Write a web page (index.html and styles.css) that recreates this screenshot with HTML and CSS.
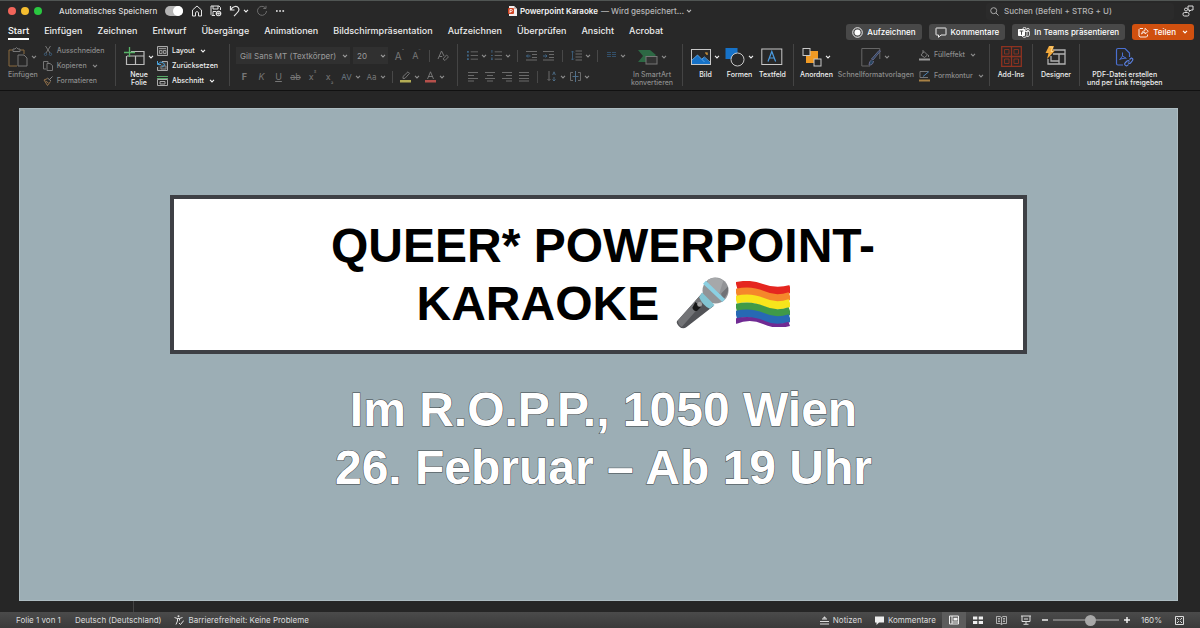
FILE: index.html
```html
<!DOCTYPE html>
<html lang="de">
<head>
<meta charset="utf-8">
<title>Powerpoint Karaoke</title>
<link rel="stylesheet" href="styles.css">
</head>
<body>
<svg class="defs" aria-hidden="true">
  <symbol id="chev" viewBox="0 0 6 4"><path d="M1 .8 3 2.9 5 .8" fill="none" stroke="currentColor" stroke-width="1.1"/></symbol>
  <symbol id="bullets" viewBox="0 0 12 12"><path d="M4 2h8M4 6h8M4 10h8" stroke="#6a6a6a"/><path d="M0 2h2M0 6h2M0 10h2" stroke="#3f6585" stroke-width="2"/></symbol>
  <symbol id="numbers" viewBox="0 0 12 12"><path d="M4 2h8M4 6h8M4 10h8" stroke="#6a6a6a"/><path d="M1 0v3M0 6h2M0 10h2M1 8v3" stroke="#3f6585"/></symbol>
</svg>

<header class="titlebar">
  <div class="tb-left">
    <span class="lights"><i class="red"></i><i class="yellow"></i><i class="green"></i></span>
    <label class="autosave" for="autosave">Automatisches Speichern</label>
    <input class="switch" type="checkbox" id="autosave" role="switch" checked>
    <button class="ib" aria-label="Start"><svg width="12" height="12" viewBox="0 0 12 12"><path d="M1.500 5 6 1l4.500 4v6h-3V7.500Q6 5.500 4.500 7.500V11h-3z" fill="none" stroke="#e4e4e4"/></svg></button>
    <button class="ib" aria-label="Sichern"><svg width="12" height="12" viewBox="0 0 12 12"><path d="M5 10.500H2L1 9.500V1h8l1.500 1.500V5M3 1v3h5V1M3 10V6.500h3" fill="none" stroke="#e4e4e4"/><circle cx="8.500" cy="8.500" r="2.800" fill="#e4e4e4"/><path d="M7 8q1.500-1.200 3 0M7 9.300q1.500 1 3 0" stroke="#282828" stroke-width=".7" fill="none"/></svg></button>
    <button class="ib undo" aria-label="Widerrufen"><svg width="12" height="12" viewBox="0 0 12 12"><path d="M1.500 1v4h4M1.700 4.700C4 1 8 .5 9.500 3S9 7 5 11" fill="none" stroke="#e4e4e4" stroke-width="1.200"/></svg><svg class="chev"><use href="#chev"/></svg></button>
    <button class="ib" aria-label="Wiederholen" disabled><svg width="12" height="12" viewBox="0 0 12 12"><path d="M9.500 3A4.500 4.500 0 1 0 10.500 6M10 .8V3.500H7.300" fill="none" stroke="#6c6c6c"/></svg></button>
    <button class="ib" aria-label="Mehr"><svg width="10" height="4"><path d="M1 2h1.700M4.200 2h1.700M7.400 2h1.700" stroke="#f0f0f0" stroke-width="1.700"/></svg></button>
  </div>
  <div class="doc"><svg width="9" height="10" viewBox="0 0 9 10"><path d="M1 0h5l3 3v7H1z" fill="#f3eeee"/><path d="M6 0v3h3" fill="#c9b9b5"/><rect y="2" width="6" height="6" rx="1" fill="#d04423"/><path d="M2 7V3.500h1.300a1 1 0 0 1 0 2H2" fill="none" stroke="#fff" stroke-width=".8"/></svg><b>Powerpoint Karaoke</b><span>— Wird gespeichert…</span><svg class="chev"><use href="#chev"/></svg></div>
  <div class="tb-right">
    <label class="search"><svg width="9" height="9" viewBox="0 0 9 9"><circle cx="3.700" cy="3.700" r="3" fill="none" stroke="#aaa"/><path d="M6 6l2.500 2.500" stroke="#aaa"/></svg><input type="text" aria-label="Suchen" placeholder="Suchen (Befehl + STRG + U)"></label>
    <button class="ib" aria-label="Zusammenarbeit"><svg width="12" height="12" viewBox="0 0 12 12"><path d="M6 1h5v4H9L7.500 6.500V5H6z" fill="none" stroke="#ddd"/><circle cx="4" cy="4.500" r="1.500" fill="#282828" stroke="#ddd"/><rect x="1" y="7.500" width="6" height="3.500" rx="1.500" fill="none" stroke="#ddd"/></svg></button>
  </div>
</header>

<div class="tabbar">
  <nav class="tabs">
    <a href="#" class="active">Start</a><a href="#">Einfügen</a><a href="#">Zeichnen</a><a href="#">Entwurf</a><a href="#">Übergänge</a><a href="#">Animationen</a><a href="#">Bildschirmpräsentation</a><a href="#">Aufzeichnen</a><a href="#">Überprüfen</a><a href="#">Ansicht</a><a href="#">Acrobat</a>
  </nav>
  <div class="actions">
    <button class="pill"><svg width="11" height="11" viewBox="0 0 11 11"><circle cx="5.500" cy="5.500" r="4.800" fill="none" stroke="#fff" stroke-width=".9"/><circle cx="5.500" cy="5.500" r="3" fill="#fff"/></svg>Aufzeichnen</button>
    <button class="pill"><svg width="12" height="11" viewBox="0 0 12 11"><path d="M1.500 1h9q.5 0 .5.500v6q0 .5-.5.500H6L3.500 10.300V8h-2Q1 8 1 7.500v-6Q1 1 1.500 1z" fill="none" stroke="#fff" stroke-width=".9"/></svg>Kommentare</button>
    <button class="pill"><svg width="12" height="11" viewBox="0 0 12 11"><circle cx="6.500" cy="2" r="1.600" fill="none" stroke="#fff" stroke-width=".8"/><circle cx="10" cy="2.500" r="1.200" fill="none" stroke="#fff" stroke-width=".8"/><path d="M8 4.500h3.500V8q-.5 2-2.500 1.500M4 9q1 1.700 3 1.300T9 8V4.500H7" fill="none" stroke="#fff" stroke-width=".8"/><rect y="2" width="7" height="7" rx=".8" fill="#fff"/><path d="M1.700 4h3.600M3.500 4v3.800" stroke="#484848"/></svg>In Teams präsentieren</button>
    <button class="pill share"><svg width="11" height="11" viewBox="0 0 11 11"><path d="M5 1.500H2L1 2.500v6.500l1 1h6.500l1-1V7.500" fill="none" stroke="#fff" stroke-width=".9"/><path d="M3.500 7Q4 3.700 7 3.500V1.300L10.300 4.300 7 7V5.200Q5 5.200 3.500 7z" fill="none" stroke="#fff" stroke-width=".8"/></svg>Teilen<svg class="chev"><use href="#chev"/></svg></button>
  </div>
</div>

<section class="ribbon" aria-label="Start">
  <div class="group g1">
    <button class="big off"><span class="pic"><svg width="20" height="20" viewBox="0 0 20 20"><path d="M9 19H1V3h4M12 3h4v4" fill="none" stroke="#8a6a3e"/><path d="M5 4.500V2h2q1.500-3 3 0h2v2.500z" fill="none" stroke="#777"/><path d="M10 8h6l3 3v8h-9z" fill="#282828" stroke="#777"/></svg><svg class="chev"><use href="#chev"/></svg></span><span>Einfügen</span></button>
    <div class="rows off">
      <button><svg width="10" height="10" viewBox="0 0 10 10"><path d="M2.500 0 7 7M7.500 0 3 7" stroke="#777"/><circle cx="2.500" cy="8.300" r="1.200" fill="none" stroke="#3f6585" stroke-width=".8"/><circle cx="7.500" cy="8.300" r="1.200" fill="none" stroke="#3f6585" stroke-width=".8"/></svg>Ausschneiden</button>
      <button><svg width="10" height="10" viewBox="0 0 10 10"><path d="M3 8H.5V.5H5V2M4 2.500h3l2.500 2V9.500H4z" fill="none" stroke="#777"/></svg>Kopieren<svg class="chev"><use href="#chev"/></svg></button>
      <button><svg width="10" height="10" viewBox="0 0 10 10"><path d="M9.500.5 6.500 3.500M4.500 2l3.500 3" stroke="#888"/><path d="M4.500 2.500 1 4l3.500 5.500L7.500 5.500M2.500 5l3 2" fill="none" stroke="#94724a"/></svg>Formatieren</button>
    </div>
  </div>

  <div class="group g2">
    <button class="big"><span class="pic"><svg width="21" height="20" viewBox="0 0 21 20"><path d="M7 4.500h13v13H2.500V9M3 9h17M11.500 9v8" fill="none" stroke="#bbb" stroke-width="1.200"/><path d="M5.500 0v10M0 5.500h11" stroke="#58b368" stroke-width="1.300"/></svg><svg class="chev"><use href="#chev"/></svg></span><span>Neue<br>Folie</span></button>
    <div class="rows">
      <button><svg width="11" height="10" viewBox="0 0 11 10"><path d="M.5.5h10v9H.5z" fill="#3b3b3b" stroke="#aaa"/><path d="M2 2.500h7M2.500 4.500h2.500v3H2.500zM6.500 4.500h2.500v3H6.500z" fill="none" stroke="#aaa" stroke-width=".8"/></svg>Layout<svg class="chev"><use href="#chev"/></svg></button>
      <button><svg width="11" height="10" viewBox="0 0 11 10"><path d="M5 .5h5.500v9h-10V6" fill="#3b3b3b" stroke="#aaa"/><path d="M4 5h5v3H4z" fill="none" stroke="#888"/><path d="M.5 0v3.500H4M.8 3Q4-.5 6.500 2T5 6" fill="none" stroke="#4ba3dc"/></svg>Zurücksetzen</button>
      <button><svg width="11" height="10" viewBox="0 0 11 10"><path d="M0 .5h11M0 2.500h11" stroke="#58a868"/><path d="M.5 3.500h10v6H.5zM3 5.500h5v2.500H3z" fill="none" stroke="#aaa"/></svg>Abschnitt<svg class="chev"><use href="#chev"/></svg></button>
    </div>
  </div>

  <div class="group g3 off">
    <div class="line">
      <span class="combo font"><select aria-label="Schriftart"><option>Gill Sans MT (Textkörper)</option></select><svg class="chev"><use href="#chev"/></svg></span>
      <span class="combo size"><select aria-label="Schriftgrad"><option>20</option></select><svg class="chev"><use href="#chev"/></svg></span>
      <button class="c lg" aria-label="Größer">A<sup>ˆ</sup></button><button class="c" aria-label="Kleiner">A<sup>ˇ</sup></button><i class="sep"></i>
      <button class="c" aria-label="Formatierung löschen"><svg width="12" height="12" viewBox="0 0 12 12"><path d="M1 9 4.500 1 7 6M2.200 6.500h3" fill="none" stroke="#777"/><path d="M6 9 9.500 5l2 1.800L8 10.500z" fill="none" stroke="#777" stroke-width=".9"/></svg></button>
    </div>
    <div class="line">
      <button class="c"><b>F</b></button><button class="c"><em>K</em></button><button class="c"><u>U</u></button><button class="c"><s>ab</s></button><button class="c">x<sup>²</sup></button><button class="c">x<sub>₂</sub></button><button class="c av">AV</button><svg class="chev"><use href="#chev"/></svg><button class="c aa">Aa</button><svg class="chev"><use href="#chev"/></svg><i class="sep"></i>
      <button class="c" aria-label="Texthervorhebung"><svg width="11" height="12" viewBox="0 0 11 12"><path d="M3 7.500V5.500L8 .8l1.500 1.500-4.500 5z" fill="none" stroke="#888" stroke-width=".8"/><rect y="9" width="11" height="2.500" fill="#b4ad55"/></svg></button><svg class="chev"><use href="#chev"/></svg>
      <button class="c" aria-label="Schriftfarbe"><svg width="11" height="12" viewBox="0 0 11 12"><path d="M2.500 8 5.500.8 8.500 8M3.500 5.500h4" fill="none" stroke="#888" stroke-width=".8"/><rect y="9" width="11" height="2.500" fill="#b5504b"/></svg></button><svg class="chev"><use href="#chev"/></svg>
    </div>
  </div>

  <div class="group g4 off">
    <div class="paras">
      <div class="line">
        <button class="c" aria-label="Aufzählung"><svg width="11" height="11"><use href="#bullets"/></svg></button><svg class="chev"><use href="#chev"/></svg>
        <button class="c" aria-label="Nummerierung"><svg width="11" height="11"><use href="#numbers"/></svg></button><svg class="chev"><use href="#chev"/></svg><i class="sep"></i>
        <button class="c" aria-label="Einzug verkleinern"><svg width="11" height="11" viewBox="0 0 11 11"><path d="M0 1.500h11M6 4.500h5M6 7.500h5M0 10h11" stroke="#6a6a6a"/><path d="M4.500 6H.5M2 4.500.5 6 2 7.500" fill="none" stroke="#3f6585"/></svg></button>
        <button class="c" aria-label="Einzug vergrößern"><svg width="11" height="11" viewBox="0 0 11 11"><path d="M0 1.500h11M6 4.500h5M6 7.500h5M0 10h11" stroke="#6a6a6a"/><path d="M0 6h4M2.500 4.500 4 6 2.500 7.500" fill="none" stroke="#3f6585"/></svg></button><i class="sep"></i>
        <button class="c" aria-label="Zeilenabstand"><svg width="11" height="11" viewBox="0 0 11 11"><path d="M4.500 1h6.500M4.500 4h6.500M4.500 7h6.500M4.500 10h6.500" stroke="#6a6a6a"/><path d="M1.500 1v9M0 2.500 1.500 1 3 2.500M0 8.500 1.500 10 3 8.500" fill="none" stroke="#3f6585" stroke-width=".8"/></svg></button><svg class="chev"><use href="#chev"/></svg><i class="sep"></i>
        <button class="c" aria-label="Spalten"><svg width="9" height="7" viewBox="0 0 9 7"><path d="M0 .5h4M5 .5h4M0 2.500h4M5 2.500h4M0 4.500h4M5 4.500h4" stroke="#33506a"/></svg></button><svg class="chev"><use href="#chev"/></svg>
      </div>
      <div class="line">
        <button class="c" aria-label="Linksbündig"><svg width="10" height="11"><path d="M0 1.500h10M0 4.500h6M0 7.500h10M0 10h6" stroke="#6a6a6a"/></svg></button><button class="c" aria-label="Zentriert"><svg width="10" height="11"><path d="M0 1.500h10M2 4.500h6M0 7.500h10M2 10h6" stroke="#6a6a6a"/></svg></button><button class="c" aria-label="Rechtsbündig"><svg width="10" height="11"><path d="M0 1.500h10M4 4.500h6M0 7.500h10M4 10h6" stroke="#6a6a6a"/></svg></button><button class="c" aria-label="Blocksatz"><svg width="10" height="11"><path d="M0 1.500h10M0 4.500h10M0 7.500h10M0 10h10" stroke="#6a6a6a"/></svg></button><i class="sep"></i>
        <button class="c" aria-label="Textrichtung"><svg width="10" height="11" viewBox="0 0 10 11"><path d="M2 0v9.500M.5 8 2 9.500 3.500 8" fill="none" stroke="#6a6a6a"/><path d="M7 10V6M5.500 8.500 7 10l1.500-1.500M5.700 4 7 .8 8.300 4" fill="none" stroke="#4f6f8a" stroke-width=".9"/></svg></button><svg class="chev"><use href="#chev"/></svg>
        <button class="c" aria-label="Text ausrichten"><svg width="11" height="11" viewBox="0 0 11 11"><path d="M3 1.500H.5v8H3M8 1.500h2.500v8H8" fill="none" stroke="#6a6a6a"/><path d="M5.500 0v11M2.500 5.500h6" stroke="#4f6f8a"/></svg></button><svg class="chev"><use href="#chev"/></svg>
      </div>
    </div>
    <button class="big off"><span class="pic"><svg width="21" height="20" viewBox="0 0 21 20"><path d="M1 3h12l6 5-2 2H9v5H1l5-6z" fill="#2d6844"/><rect x="9" y="9.500" width="11" height="7.500" fill="#333" stroke="#777"/></svg><svg class="chev"><use href="#chev"/></svg></span><span>In SmartArt<br>konvertieren</span></button>
  </div>

  <div class="group g5">
    <button class="big"><span class="pic"><svg width="20" height="20" viewBox="0 0 20 20"><rect x=".5" y="2.500" width="19" height="15" fill="#282828" stroke="#c8c8c8"/><path d="M1 16v-3l5.500-5 4 4 2.500-2 6 5.500V17H1z" fill="#1672c8"/><path d="M1 13l5.500-5 7 7M11 12l2.500-2 5.500 5" fill="none" stroke="#69b0ee" stroke-width=".8"/><path d="M14 6h2v2" stroke="#e8a33b" fill="none" stroke-width="1.200"/></svg><svg class="chev"><use href="#chev"/></svg></span><span>Bild</span></button>
    <button class="big"><span class="pic"><svg width="20" height="20" viewBox="0 0 20 20"><rect x=".5" y="1" width="12" height="11" fill="#1672c8"/><circle cx="12.500" cy="12.500" r="6.500" fill="#282828" stroke="#c8c8c8"/></svg><svg class="chev"><use href="#chev"/></svg></span><span>Formen</span></button>
    <button class="big"><span class="pic"><svg width="22" height="20" viewBox="0 0 22 20"><rect x=".8" y="2" width="20" height="15.500" fill="none" stroke="#c8c8c8"/><path d="M7 14.500 10.800 4.500l3.800 10M8.200 11h5.200" fill="none" stroke="#4a9be0" stroke-width="1.200"/></svg></span><span>Textfeld</span></button>
  </div>

  <div class="group g6">
    <button class="big"><span class="pic"><svg width="20" height="20" viewBox="0 0 20 20"><path d="M4 4h12v12H4z" fill="#f09a24"/><rect x="1" y="1.500" width="7" height="7" fill="#282828" stroke="#c8c8c8"/><rect x="12" y="12" width="7" height="7" fill="#282828" stroke="#c8c8c8"/></svg><svg class="chev"><use href="#chev"/></svg></span><span>Anordnen</span></button>
    <button class="big off styles"><span class="pic"><svg width="20" height="20" viewBox="0 0 20 20"><path d="M9 19H.8V1.500h18V12" fill="none" stroke="#666"/><path d="M19.500 4 12 13l-1.500-1L18 3.500zM10.500 13Q8 14 8 18q4 .5 4.500-4" fill="#29475f" stroke="#668"/></svg><svg class="chev"><use href="#chev"/></svg></span><span>Schnellformatvorlagen</span></button>
    <div class="rows fx off">
      <button><svg width="11" height="11" viewBox="0 0 11 11"><path d="M2 5 5 1.500 8.500 5 5.500 7.500zM4 0v3M9.500 5v2" fill="none" stroke="#888" stroke-width=".9"/><rect y="8.500" width="11" height="2" fill="#999"/></svg>Fülleffekt<svg class="chev"><use href="#chev"/></svg></button>
      <button><svg width="11" height="11" viewBox="0 0 11 11"><path d="M9 .5H1v6h8" fill="none" stroke="#777"/><path d="M4 5.500 10 .5" stroke="#4b83b5"/><rect y="8.500" width="11" height="2" fill="#a88145"/></svg>Formkontur<svg class="chev"><use href="#chev"/></svg></button>
    </div>
  </div>

  <div class="group g7"><button class="big"><span class="pic"><svg width="21" height="21" viewBox="0 0 21 21"><path d="M.7.7h19.600v19.600H.7zM10.500 1v19M1 10.500h19" fill="none" stroke="#8f3220" stroke-width="1.300"/><path d="M3.500 3.500H8V8H3.500zM13 3.500h4.500V8H13zM3.500 13H8v4.500H3.500zM13 13h4.500v4.500H13z" fill="none" stroke="#8f3220" stroke-width=".9"/></svg></span><span>Add-Ins</span></button></div>
  <div class="group g8"><button class="big"><span class="pic"><svg width="21" height="21" viewBox="0 0 21 21"><path d="M8 4h12v14H3v-5M8 8h12M14 8v10M6 10v5h8" fill="none" stroke="#b0b0b0" stroke-width="1.300"/><path d="M4 0h5L7.500 4.500H10L2 13l1.500-6H.5z" fill="#f2a83a"/><path d="M4.500 1h3L6 5.500h2" fill="none" stroke="#ffdf9c" stroke-width=".8"/></svg></span><span>Designer</span></button></div>
  <div class="group g9"><button class="big"><span class="pic"><svg width="19" height="20" viewBox="0 0 19 20"><path d="M8 18H3Q1.500 18 1.500 16.500V3Q1.500 1.500 3 1.500h7L14.500 6v4" fill="none" stroke="#4a6fd0" stroke-width="1.200"/><path d="M7.500 5.500v3.500L4.500 13M7.500 9l4 2.500M5 12l6-1" fill="none" stroke="#4a6fd0"/><path d="M10 16l2-2q1.500-.8 2.500.5M13 15.500q1 1.500 2.500.5l2-2.500q1-2-1-2.500l-2 1.500M13.500 17.500q-2 2.500-3.500.5-.8-1 0-2" fill="none" stroke="#5a80e0" stroke-width="1.200"/></svg></span><span>PDF-Datei erstellen<br>und per Link freigeben</span></button></div>
</section>

<main class="workspace">
  <article class="slide">
    <h1>QUEER* POWERPOINT-<br>KARAOKE <svg class="mic" viewBox="0 0 54 56" role="img" aria-label="Mikrofon"><path d="M26 18 38 31 10 53Q6 56 2 52T1 46z" fill="#525357"/><path d="M26 18l5 5L5 53Q1 51 1 46z" fill="#737477"/><path d="M19 27l6 5-4 4q-4 1-5-3z" fill="#161616"/><circle cx="23.500" cy="29.500" r="2.500" fill="#a0a0a0"/><circle cx="40" cy="15" r="13.500" fill="#929497"/><path d="M32 4Q40-1 48 5l-4 13-12-9z" fill="#a6a8aa"/><path d="M46 26Q54 20 53 11l-7 7z" fill="#707276"/><path d="M30 5 50 24l-3 3L27 8z" fill="#8bd0e2"/><path d="M26 17 39 30l-5 4q-7-3-11-12z" fill="#82c4d2"/></svg><svg class="flag" viewBox="0 0 54 46" role="img" aria-label="Regenbogenflagge"><defs><clipPath id="wave"><path d="M0 1Q14-2 27 3T54 4V45Q40 49 27 43T0 43z"/></clipPath></defs><g clip-path="url(#wave)" fill="none" stroke-width="8"><path d="M0 3Q14-1 27 5T54 6" stroke="#e5261f" stroke-width="12"/><path d="M0 12Q14 8 27 14T54 15" stroke="#f5872b"/><path d="M0 19Q14 15 27 21T54 22" stroke="#f8e51c"/><path d="M0 27Q14 23 27 29T54 30" stroke="#3f9a48"/><path d="M0 34Q14 30 27 36T54 37" stroke="#2769b4"/><path d="M0 42Q14 38 27 44T54 45" stroke="#702a93" stroke-width="9"/></g></svg></h1>
    <p>Im R.O.P.P., 1050 Wien<br>26. Februar – Ab 19 Uhr</p>
  </article>
  <div class="notes"></div>
</main>

<footer class="status">
  <span>Folie 1 von 1</span>
  <button class="lang">Deutsch (Deutschland)</button>
  <button class="a11y"><svg width="10" height="10" viewBox="0 0 10 10"><circle cx="4.500" cy="1.300" r="1" fill="#e2e2e2"/><path d="M.5 2.500 3.500 3.500V6L2 9.500M8.500 2.500 5.500 3.500V5.500M3.500 3.500h2M5 8l1.500 1.500L9.800 5.500" fill="none" stroke="#e2e2e2"/></svg>Barrierefreiheit: Keine Probleme</button>
  <div class="right">
    <button><svg width="9" height="9" viewBox="0 0 9 9"><path d="M0 5.500h9M0 8h9M2 3h5" stroke="#ddd"/><path d="M2.500 2.500 4.500.3l2 2.200z" fill="#ddd"/></svg>Notizen</button>
    <button class="com"><svg width="9" height="9" viewBox="0 0 9 9"><path d="M0 .5h9v6H4L1.500 9V6.500H0z" fill="#eee"/></svg>Kommentare</button>
    <div class="views">
      <button class="on" aria-label="Normal"><svg width="10" height="10" viewBox="0 0 10 10"><path d="M.5 1h9v8h-9zM3 1v8M3 7h6" fill="none" stroke="#eee"/><path d="M4.500 2.800h4v2.700h-4z" fill="#eee"/></svg></button>
      <button aria-label="Foliensortierung"><svg width="10" height="10" viewBox="0 0 10 10"><path d="M0 1.500h4.300v3H0zM5.700 1.500H10v3H5.700zM0 6h4.300v3H0zM5.700 6H10v3H5.700z" fill="#eee"/></svg></button>
      <button aria-label="Leseansicht"><svg width="11" height="10" viewBox="0 0 11 10"><path d="M.5 1.500h3.500L5.500 2.500 7 1.500h3.500v7H7L5.500 9.500 4 8.500H.5zM5.500 2.500v7M2 3.500h2M2 5h2M2 6.500h2M7 3.500h2M7 5h2M7 6.500h2" fill="none" stroke="#ccc" stroke-width=".8"/></svg></button>
      <button aria-label="Bildschirmpräsentation"><svg width="10" height="10" viewBox="0 0 10 10"><path d="M0 1h10M1 1v5.500h8V1M5 6.500V9M2.500 9.300h5M3 4h4" fill="none" stroke="#ddd"/></svg></button>
    </div>
    <button class="zm" aria-label="Verkleinern"><svg width="6" height="6"><path d="M0 3h6" stroke="#eee" stroke-width="1.500"/></svg></button>
    <input type="range" min="0" max="100" value="59" aria-label="Zoom">
    <button class="zm" aria-label="Vergrößern"><svg width="6" height="6"><path d="M0 3h6M3 0v6" stroke="#eee" stroke-width="1.500"/></svg></button>
    <button class="pct">160%</button>
    <button class="fit" aria-label="Anpassen"><svg width="9" height="9" viewBox="0 0 9 9"><path d="M.5.5h8v8h-8zM2 2l1.800 1.800M7 2 5.200 3.800M2 7l1.800-1.800M7 7 5.200 5.200" fill="none" stroke="#ddd"/></svg></button>
  </div>
</footer>
</body>
</html>
```

FILE: styles.css
```css
* { box-sizing: border-box; }
html, body { height: 100%; }
body {
  margin: 0;
  display: flex;
  flex-direction: column;
  background: #282828;
  color: #f0f0f0;
  font: 500 7px/8px Inter, "Liberation Sans", sans-serif;
}
button, input, select { font: inherit; color: inherit; margin: 0; }
button { display: flex; align-items: center; padding: 0; border: 0; background: none; white-space: nowrap; }
svg { flex: none; display: block; }
.defs { position: absolute; width: 0; height: 0; }
.chev { width: 6px; height: 4px; }

.titlebar {
  display: grid;
  grid-template-columns: 1fr auto 1fr;
  align-items: center;
  height: 21px;
  border-top: 1px solid #505553;
}
.tb-left { display: flex; align-items: center; padding-left: 8px; }
.lights { display: flex; gap: 5px; margin-right: 17px; }
.lights i { width: 8px; height: 8px; border-radius: 50%; }
.red { background: #f2655a; }
.yellow { background: #f5bd2f; }
.green { background: #2ac840; }
.autosave { margin-right: 8px; color: #dcdcdc; font-size: 8px; }
.switch { appearance: none; width: 18px; height: 10px; border-radius: 5px; background: #b4b4b4; display: flex; justify-content: flex-end; margin-right: 8px; }
.switch::before { content: ""; width: 10px; height: 10px; border-radius: 50%; background: #fff; }
.ib { margin-right: 7px; }
.undo { gap: 2px; }
.doc { display: flex; align-items: center; font-size: 8px; color: #b8b8b8; }
.doc b { color: #f4f4f4; font-weight: 600; margin: 0 3px; }
.doc .chev { margin-left: 2px; }
.tb-right { display: flex; justify-content: flex-end; align-items: center; gap: 8px; }
.tb-right .ib { margin-right: 6px; }
.search { display: flex; align-items: center; gap: 5px; width: 188px; height: 17px; padding-left: 4px; border-radius: 3px; background: #2b2b2b; font-size: 8px; }
.search input { flex: 1; min-width: 0; border: 0; padding: 0; background: none; outline: 0; }
.search input::placeholder { color: #b4b4b4; opacity: 1; }

.tabbar { display: flex; justify-content: space-between; height: 21px; padding: 3px 6px 0 8px; }
.tabs { display: flex; gap: 15px; align-items: flex-start; font-size: 9px; line-height: 14px; }
.tabs a { color: #ececec; text-decoration: none; height: 16px; white-space: nowrap; }
.tabs .active { border-bottom: 2px solid #fff; font-weight: 600; }
.actions { display: flex; gap: 7px; font-size: 8px; }
.pill { gap: 4px; height: 16px; padding: 0 6px; border-radius: 3px; background: #484848; color: #fff; }
.share { background: #d0500f; }
.share .chev { margin-left: 2px; }

.ribbon { display: flex; height: 49px; padding: 2px 0 5px; border-bottom: 1px solid #111; }
.group { display: flex; border-right: 1px solid #444; height: 42px; }
.group:last-child { border: 0; }
.off { color: #8c8c8c; }
.big { flex-direction: column; text-align: center; align-self: flex-start; }
.pic { display: flex; align-items: center; gap: 3px; height: 27px; padding: 2px 0 4px; }
.rows { display: flex; flex-direction: column; justify-content: space-between; padding: 2px 0 0; height: 42px; }
.rows button { gap: 4px; height: 10px; }
.rows .chev { margin-left: 1px; }
.g1 { padding-left: 8px; width: 116px; gap: 5px; }
.g2 { padding-left: 8px; width: 114px; gap: 3px; }
.g3 { width: 228px; padding: 3px 0 0 6px; flex-direction: column; gap: 4px; }
.g3 button + .chev { margin-right: 2px; }
.line { display: flex; align-items: center; height: 17px; }
.combo { display: flex; align-items: center; height: 17px; padding: 0 2px 0 4px; background: #303030; margin-right: 3px; font-size: 8px; color: #9c9c9c; }
.combo select { flex: 1; min-width: 0; appearance: none; border: 0; padding: 0; background: none; font-weight: 400; }
.font { width: 114px; }
.size { width: 35px; }
.c { justify-content: center; width: 17px; height: 14px; font-size: 9px; font-weight: 400; color: #777; }
.c sup, .c sub { font-size: 6px; line-height: 6px; }
.c sup { align-self: flex-start; }
.c sub { align-self: flex-end; }
.lg { font-size: 10px; }
.av, .aa { font-size: 8px; }
.av { color: #6c7a86; }
.line .sep { width: 1px; height: 12px; background: #484848; margin: 0 4px; }
.g4 { width: 225px; padding-left: 6px; gap: 4px; }
.g4 .line .sep { margin: 0 5px; }
.g4 .line .chev { margin-right: 1px; }
.paras { display: flex; flex-direction: column; gap: 4px; padding-top: 3px; }
.g5 { width: 111px; padding-left: 8px; gap: 5px; }
.g6 { width: 196px; padding-left: 6px; gap: 5px; }
.rows.fx { justify-content: flex-start; gap: 11px; padding-top: 6px; }
.g7, .g8 { justify-content: center; }
.g7 { width: 43px; }
.g8 { width: 47px; }
.g9 { padding-left: 7px; }

.workspace { flex: 1; display: flex; flex-direction: column; background: #262626; padding: 17px 22px 0 19px; min-height: 0; }
.slide { flex: 1; background: #9caeb5; border: 1px solid #aebdc2; padding: 86px 150px 0; font: 700 48px/58px "Liberation Sans", Arial, sans-serif; text-align: center; }
.slide h1 { margin: 0; border: 4px solid #3e4045; background: #fff; color: #000; font: inherit; padding: 18px 0 17px 9px; }
.slide h1 svg { display: inline-block; }
.mic { width: 54px; height: 54px; margin-left: 3px; vertical-align: -10px; }
.flag { width: 54px; height: 46px; margin-left: 6px; vertical-align: -7px; }
.slide p { margin: 27px 0 0; padding-left: 10px; color: #fff; -webkit-text-stroke: 1px #3d4447; paint-order: stroke fill; }
.notes { height: 11px; width: 115px; border-right: 1px solid #444; }

.status { display: flex; align-items: center; height: 16px; padding-left: 16px; background: linear-gradient(#4b4b4b, #3a3a3a); color: #dcdcdc; font-weight: 400; font-size: 8px; }
.status button { gap: 4px; }
.lang { margin-left: 14px; }
.a11y { margin-left: 13px; }
.right { display: flex; align-items: center; margin-left: auto; padding-right: 16px; height: 16px; }
.com { margin-left: 13px; }
.views { display: flex; margin: 0 4px 0 6px; }
.views button { width: 24px; height: 16px; justify-content: center; }
.views .on { background: #5c5c5c; }
.zm { height: 16px; }
.right input { appearance: none; width: 66px; height: 12px; margin: 0 5px; background: linear-gradient(#7a7a7a, #7a7a7a) center / 100% 2px no-repeat; }
.right input::-webkit-slider-thumb { appearance: none; width: 11px; height: 11px; border-radius: 50%; background: #a8a8a8; }
.pct { margin-left: 11px; }
.fit { margin-left: 13px; }
```
